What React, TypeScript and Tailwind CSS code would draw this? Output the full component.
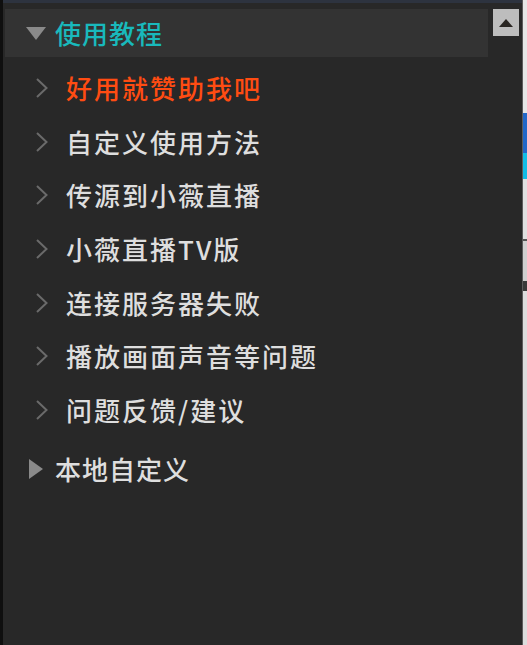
import React from "react";

const FONT = { fontFamily: '"Noto Sans CJK SC", "Noto Sans", sans-serif' };

const ITEMS = [
  { label: "好用就赞助我吧", hot: true },
  { label: "自定义使用方法" },
  { label: "传源到小薇直播" },
  { label: "小薇直播TV版" },
  { label: "连接服务器失败" },
  { label: "播放画面声音等问题" },
  { label: "问题反馈/建议" },
];

function Chevron() {
  return (
    <svg width="14" height="22" viewBox="0 0 14 22" className="shrink-0">
      <path d="M2 2 L11.5 11 L2 20" fill="none" stroke="#6a6a6a" strokeWidth="2" />
    </svg>
  );
}

export default function App() {
  return (
    <div className="flex h-[645px] w-[527px] bg-[#282828] overflow-hidden" style={FONT}>
      {/* left frame edge */}
      <div className="w-[3px] bg-[#0f0f0f]" />

      <div className="flex flex-1 flex-col border-t-[3px] border-[#2d333f]">
        <div className="flex flex-1 pt-[6px]">
          {/* tree */}
          <div className="flex flex-1 flex-col pl-[2px]">
            <div className="flex h-[48px] items-center bg-[#333333] pl-[20px]">
              <svg width="22" height="15" viewBox="0 0 22 15">
                <path d="M1 1 L21 1 L11 14 Z" fill="#8a8a8a" />
              </svg>
              <span className="ml-[8px] text-[26px] font-medium leading-none tracking-[1px] text-[#19b9bc]">使用教程</span>
            </div>

            <div className="mt-[4px] flex flex-col">
              {ITEMS.map((item) => (
                <div key={item.label} className="flex h-[53.7px] items-center pl-[30px]">
                  <Chevron />
                  <span
                    className={
                      "ml-[17px] text-[26px] font-medium leading-none tracking-[2px] " +
                      (item.hot ? "text-[#ff4c12]" : "text-[#dedede]")
                    }
                  >
                    {item.label}
                  </span>
                </div>
              ))}
            </div>

            <div className="mt-[8px] flex h-[48px] items-center pl-[23px]">
              <svg width="16" height="22" viewBox="0 0 16 22">
                <path d="M1 1 L15 11 L1 21 Z" fill="#8a8a8a" />
              </svg>
              <span className="ml-[11px] text-[26px] font-medium leading-none tracking-[1px] text-[#dedede]">本地自定义</span>
            </div>
          </div>

          {/* scrollbar column */}
          <div className="w-[34px] pl-[5px]">
            <div className="flex h-[27px] w-[26px] items-center justify-center bg-[#bdbdbd]">
              <svg width="16" height="10" viewBox="0 0 16 10">
                <path d="M1 9 L8 1 L15 9 Z" fill="#2a2622" />
              </svg>
            </div>
          </div>
        </div>
      </div>

      {/* window edge + app behind */}
      <div className="w-[1px] bg-[#5c5c5c]" />
      <div className="flex w-[4px] flex-col bg-[#d9d9d9]">
        <div className="h-[113px] bg-[#e6e6e6]" />
        <div className="h-[40px] bg-[#2368c8]" />
        <div className="h-[26px] bg-[#12bde6]" />
        <div className="h-[60px] bg-[#e0e0e0]" />
        <div className="h-[2px] bg-[#555]" />
        <div className="h-[40px] bg-[#cfcfcf]" />
        <div className="h-[10px] bg-[#3a3a3a]" />
        <div className="flex-1 bg-[#dcdcdc]" />
      </div>
    </div>
  );
}
